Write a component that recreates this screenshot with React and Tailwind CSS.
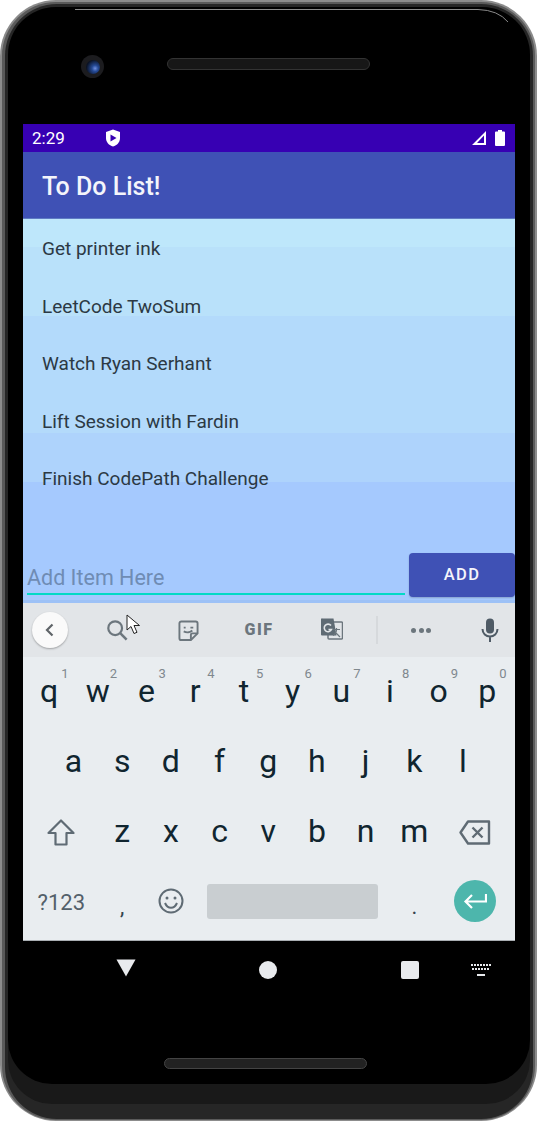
const Key = ({ w = "w-[48.7px]", hint, children, className = "" }) => (
  <div className={`relative flex h-full items-center justify-center text-[32px] leading-none text-[#10252f] ${w} ${className}`}>
    {hint && <span className="absolute right-[5px] top-[10px] text-[13px] leading-none text-[#80888e]">{hint}</span>}
    <span className="-translate-y-[1px]">{children}</span>
  </div>
);

const Tool = ({ w = "w-[72px]", children }) => (
  <div className={`flex h-full shrink-0 items-center justify-center ${w}`}>{children}</div>
);

const ROW1 = [["q", "1"], ["w", "2"], ["e", "3"], ["r", "4"], ["t", "5"], ["y", "6"], ["u", "7"], ["i", "8"], ["o", "9"], ["p", "0"]];
const ROW2 = ["a", "s", "d", "f", "g", "h", "j", "k", "l"];
const ROW3 = ["z", "x", "c", "v", "b", "n", "m"];
const ITEMS = ["Get printer ink", "LeetCode TwoSum", "Watch Ryan Serhant", "Lift Session with Fardin", "Finish CodePath Challenge"];

export default function App() {
  return (
    <div className="relative h-[1121px] w-[537px] overflow-hidden bg-white font-['Roboto',sans-serif]">
      <div className="flex h-full flex-col rounded-[56px] bg-[#8c8c8c] pb-[1px] pl-[2px] pr-[2px] pt-[2px]">
        <div className="flex flex-1 flex-col rounded-[54px] bg-[#5a5a5a] pb-[1px] pl-[3px] pr-[2px] pt-[2px]">
          <div className="flex flex-1 flex-col rounded-[52px] bg-[#262626] pb-[15px] pl-[3px] pr-[3px] pt-[3px]">
            <div className="flex flex-1 flex-col rounded-t-[48px] rounded-b-[44px] bg-[#191919] pb-[20px]">
              <div className="flex flex-1 flex-col rounded-t-[48px] rounded-b-[44px] bg-black pl-[15px] pr-[15px]">
                <div className="flex h-[117px] shrink-0 items-start pl-[58px] pt-[48px]">
                  <div className="flex h-[23px] w-[23px] items-center justify-center rounded-full bg-[#1c1c1f]">
                    <div className="h-[14px] w-[14px] rounded-full bg-[radial-gradient(circle_at_65%_60%,#6f8fe0_0,#254a96_25%,#0a1224_70%)]" />
                  </div>
                  <div className="ml-[63px] mt-[3px] h-[12px] w-[203px] rounded-full border border-[#333] bg-[#171717]" />
                </div>

                <div className="flex h-[817px] w-[492px] shrink-0 flex-col">
                  <div className="flex h-[28px] shrink-0 items-center bg-[#3700b3] pl-[9px] pr-[10px] text-white">
                    <span className="w-[61px] text-[17px] leading-none">2:29</span>
                    <svg width="16" height="18" viewBox="0 0 16 18" className="ml-[12px]">
                      <path fill="#fff" d="M8 0.5 15 3v6c0 4.2-3 7.4-7 8.5C4 16.4 1 13.2 1 9V3Z" />
                      <path fill="#3700b3" d="M5.5 5.5 11.5 9l-6 3.5Z" />
                    </svg>
                    <div className="flex-1" />
                    <svg width="16" height="16" viewBox="0 0 16 16">
                      <path fill="#fff" fillRule="evenodd" d="M15 1v14H1Zm-2 4.6L6 13h7Z" />
                    </svg>
                    <svg width="10" height="16" viewBox="0 0 10 16" className="ml-[8px]">
                      <path fill="#fff" d="M3 0h4v1.4h2a1 1 0 0 1 1 1V15a1 1 0 0 1-1 1H1a1 1 0 0 1-1-1V2.4a1 1 0 0 1 1-1h2Z" />
                    </svg>
                  </div>

                  <div className="flex h-[67px] shrink-0 items-center border-b border-[#5f7bc4] bg-[#3f51b5] pl-[19px] pt-[3px] text-[25px] font-medium leading-none text-[#f4f5fb]">
                    To Do List!
                  </div>

                  <div className="flex h-[384px] shrink-0 flex-col bg-[linear-gradient(#bee7fb_0,#bee7fb_28px,#b9e1fa_28px,#b9e1fa_97px,#b3dafb_97px,#b3dafb_214px,#aed3fc_214px,#aed3fc_263px,#a5c9fe_263px,#a5c9fe_381px,#9dc1f6_381px)]">
                    <div className="flex-1 pt-[1px]">
                      {ITEMS.map((t) => (
                        <div key={t} className="flex h-[57.5px] items-center pl-[19px] text-[19px] leading-none text-[#2c3944]">
                          {t}
                        </div>
                      ))}
                    </div>
                    <div className="flex h-[50px] shrink-0 items-start pl-[4px]">
                      <div className="mt-[5px] flex h-[37px] w-[378px] items-center border-b-2 border-[#03dac5] pt-[4px] text-[21.5px] leading-none text-[#6f8cb4]">
                        Add Item Here
                      </div>
                      <div className="ml-[4px] flex h-[44px] w-[106px] items-center justify-center rounded-[4px] bg-[#3f51b5] text-[16.5px] font-medium leading-none tracking-[1.4px] text-[#f4f5fb] shadow-[0_1px_2px_rgba(0,0,0,0.2)]">
                        ADD
                      </div>
                    </div>
                  </div>

                  <div className="flex h-[54px] shrink-0 items-center bg-[#e2e5e8] text-[#5f6b74]">
                    <div className="ml-[9px] flex h-[36px] w-[36px] shrink-0 items-center justify-center rounded-full bg-[#fafafa] shadow-[0_1px_2px_rgba(0,0,0,0.3)]">
                      <svg width="14" height="16" viewBox="0 0 14 16"><path d="M9.5 2.5 4 8l5.5 5.5" fill="none" stroke="#5f6468" strokeWidth="2.2" /></svg>
                    </div>
                    <div className="w-[13px] shrink-0" />
                    <Tool w="w-[72px]">
                      <svg width="22" height="22" viewBox="0 0 24 24" fill="none" stroke="#6c767d" strokeWidth="2.4"><circle cx="10" cy="10" r="7.5" /><path d="m15.5 15.5 7 7" strokeWidth="2.8" /></svg>
                    </Tool>
                    <Tool w="w-[70px]">
                      <svg width="21" height="21" viewBox="0 0 22 22" fill="none" stroke="#6c767d" strokeWidth="2"><path d="M3.5 1.5h15a2 2 0 0 1 2 2V14l-7 7H3.5a2 2 0 0 1-2-2V3.500a2 2 0 0 1 2-2Z" /><path d="M20.5 14H15a1.5 1.5 0 0 0-1.500 1.500V21" /><path d="M6 8h2M13 8h3M6 12c3 1.500 7 1 9-1" /></svg>
                    </Tool>
                    <Tool w="w-[72px]">
                      <span className="text-[16px] font-black leading-none tracking-[1.5px] text-[#6c767d]">GIF</span>
                    </Tool>
                    <Tool w="w-[74px]">
                      <svg width="22" height="24" viewBox="0 0 22 24">
                        <rect x="7" y="4" width="14.500" height="17" rx="1" fill="#e2e5e8" stroke="#6c767d" strokeWidth="1.500" />
                        <path fill="#5f6b74" d="M1.500 0.500h11l3 17h-14.500a1 1 0 0 1-1-1v-15a1 1 0 0 1 1.500-1Z" />
                        <path d="M10 7.500a3.800 3.800 0 1 0 0.500 4H7.500" fill="none" stroke="#e2e5e8" strokeWidth="1.600" />
                        <path d="M12 11.500h7M15.500 10v1.500c0 3-2 5-3.500 6M14 14l5 5" fill="none" stroke="#6c767d" strokeWidth="1.200" />
                      </svg>
                    </Tool>
                    <div className="ml-[7px] h-[28px] w-[2px] shrink-0 bg-[#d6d9dc]" />
                    <Tool w="w-[86px]">
                      <div className="flex gap-[2.5px]">
                        <span className="h-[5px] w-[5px] rounded-full bg-[#6c767d]" />
                        <span className="h-[5px] w-[5px] rounded-full bg-[#6c767d]" />
                        <span className="h-[5px] w-[5px] rounded-full bg-[#6c767d]" />
                      </div>
                    </Tool>
                    <Tool w="w-[52px]">
                      <svg width="18" height="24" viewBox="0 0 18 24" fill="none"><rect x="5" y="0.500" width="8" height="15" rx="4" fill="#4f5b66" /><path d="M1.500 11c0 4.500 3.500 7.500 7.500 7.500s7.500-3 7.500-7.500M9 18.500V24" stroke="#4f5b66" strokeWidth="2" /></svg>
                    </Tool>
                  </div>

                  <div className="flex h-[284px] shrink-0 flex-col border-b border-[#a9aeb2] bg-[#e9edf0] pb-[3px] pl-[1.800px]">
                    <div className="flex h-[70px]">
                      {ROW1.map(([k, h]) => <Key key={k} hint={h}>{k}</Key>)}
                    </div>
                    <div className="flex h-[70px] pl-[24.350px]">
                      {ROW2.map((k) => <Key key={k}>{k}</Key>)}
                    </div>
                    <div className="flex h-[70px]">
                      <Key w="w-[73px]">
                        <svg width="28" height="27" viewBox="0 0 28 27" fill="none" className="mt-[2px] block" stroke="#5f6b74" strokeWidth="2.200" strokeLinejoin="round"><path d="M14 1.500 26.500 14H19.500V25.500H8.500V14H1.500Z" /></svg>
                      </Key>
                      {ROW3.map((k) => <Key key={k}>{k}</Key>)}
                      <Key w="w-[73px]">
                        <svg width="32" height="25" viewBox="0 0 32 25" fill="none" className="mt-[2px] block" stroke="#5f6b74" strokeWidth="2.400" strokeLinejoin="round"><path d="M9 1.500h21v22H9L1.500 12.500Z" /><path d="m13.500 7.500 10 10m0-10-10 10" /></svg>
                      </Key>
                    </div>
                    <div className="flex h-[70px] items-stretch">
                      <Key w="w-[73px]"><span className="relative -top-[2px] text-[22px] text-[#53606a]">?123</span></Key>
                      <Key><span className="relative top-[2px] text-[22px] text-[#34434d]">,</span></Key>
                      <Key>
                        <svg width="26" height="26" viewBox="0 0 26 26" fill="none" className="block" stroke="#5f6b74" strokeWidth="2"><circle cx="13" cy="13" r="11.500" /><path d="M7 15c1.500 3.500 3.500 4.800 6 4.800s4.500-1.300 6-4.800" /><circle cx="9" cy="10" r="1.500" fill="#5f6b74" stroke="none" /><circle cx="17" cy="10" r="1.500" fill="#5f6b74" stroke="none" /></svg>
                      </Key>
                      <div className="flex w-[194.800px] items-center justify-center">
                        <div className="h-[35px] w-[171px] -translate-y-[1px] rounded-[3px] bg-[#c9ced1]" />
                      </div>
                      <Key><span className="relative top-[2px] text-[22px] text-[#34434d]">.</span></Key>
                      <div className="flex w-[73px] items-center justify-center">
                        <div className="flex h-[42px] w-[42px] -translate-y-[1px] items-center justify-center rounded-full bg-[#4db6ac]">
                          <svg width="24" height="18" viewBox="0 0 24 18" fill="none" stroke="#fff" strokeWidth="2.200"><path d="M23 2v7.500H3M9 3 2.500 9.500 9 16" /></svg>
                        </div>
                      </div>
                    </div>
                  </div>
                </div>

                <div className="flex h-[58px] shrink-0 items-center">
                  <svg width="20" height="18" viewBox="0 0 20 18" className="ml-[93px] -translate-y-[2px]"><path fill="#e8eaed" d="M0.500 0.500h19L10 17.500Z" /></svg>
                  <div className="ml-[123px] h-[18px] w-[18px] rounded-full bg-[#e8eaed]" />
                  <div className="ml-[124px] h-[18px] w-[18px] rounded-[2px] bg-[#e8eaed]" />
                  <svg width="20" height="12" viewBox="0 0 20 12" className="ml-[52px]" fill="#e8eaed">
                    <path d="M0 0h2v2H0zM3 0h2v2H3zM6 0h2v2H6zM9 0h2v2H9zM12 0h2v2h-2zM15 0h2v2h-2zM18 0h2v2h-2zM1 4h2v2H1zM4 4h2v2H4zM7 4h2v2H7zM10 4h2v2h-2zM13 4h2v2h-2zM16 4h2v2h-2zM6 10h8v2H6z" />
                  </svg>
                </div>

                <div className="flex flex-1 items-start justify-center pt-[59px] pr-[8px]">
                  <div className="h-[11px] w-[203px] rounded-full border border-[#444] bg-[#222]" />
                </div>
              </div>
            </div>
          </div>
        </div>
      </div>

      <svg width="537" height="40" viewBox="0 0 537 40" fill="none" className="absolute left-0 top-0">
        <path d="M75 9.500H478Q498 10 508 22" stroke="#8a8a8a" strokeWidth="1" />
      </svg>
      <svg width="16" height="22" viewBox="0 0 16 22" className="absolute left-[126px] top-[614px]">
        <path d="M1 1v15l4-3.500 3 7 3-1.200-3-6.800h5.500Z" fill="#fff" stroke="#222" strokeWidth="1" />
      </svg>
    </div>
  );
}
